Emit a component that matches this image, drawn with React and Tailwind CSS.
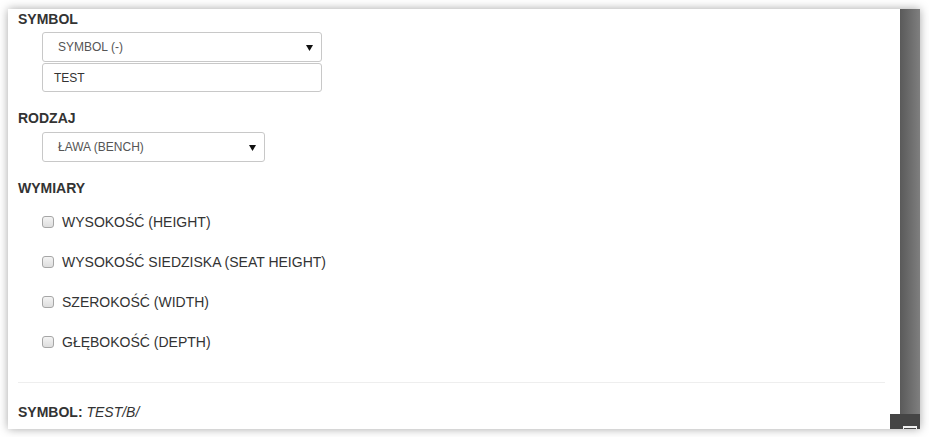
import React from "react";

function Arrow() {
  return (
    <svg width="7" height="7" viewBox="0 0 7 7" className="block">
      <path d="M0 1 L7 1 L3.5 7 Z" fill="#111" />
    </svg>
  );
}

function SelectBox({ width, text }) {
  return (
    <div
      className={`ml-[24px] h-[30px] ${width} border border-[#c8c8c8] rounded-[3px] bg-white flex items-center justify-between pl-[15px] pr-[8px]`}
    >
      <span className="text-[12px] text-[#555] leading-none">{text}</span>
      <Arrow />
    </div>
  );
}

function Check({ label }) {
  return (
    <div className="h-5 flex items-center ml-[24px]">
      <div className="w-[12px] h-[12px] rounded-[3px] border border-[#a6a6a6] bg-gradient-to-b from-[#f4f4f4] to-[#dedede]" />
      <span className="ml-[8px] text-[14px] text-[#333] leading-5">{label}</span>
    </div>
  );
}

export default function App() {
  return (
    <div
      className="w-[929px] h-[437px] bg-white relative overflow-hidden pt-[9px] pl-[8px]"
      style={{ fontFamily: '"Liberation Sans", Arial, sans-serif' }}
    >
      <div className="w-[912px] h-[420px] bg-white shadow-[0_0_9px_rgba(0,0,0,0.35)] flex relative">
        <div className="flex-1 pl-[10px] pr-[15px]">
          <div className="h-5 leading-5 text-[14px] font-bold text-[#333]">SYMBOL</div>
          <div className="mt-[3px]">
            <SelectBox width="w-[280px]" text="SYMBOL (-)" />
          </div>
          <div className="mt-[1px] ml-[24px] w-[280px] h-[29px] border border-[#c8c8c8] rounded-[3px] flex items-center pl-[11px]">
            <span className="text-[12px] text-[#333] leading-none">TEST</span>
          </div>

          <div className="mt-[16px] h-5 leading-5 text-[14px] font-bold text-[#333]">RODZAJ</div>
          <div className="mt-[4px]">
            <SelectBox width="w-[223px]" text="ŁAWA (BENCH)" />
          </div>

          <div className="mt-[16px] h-5 leading-5 text-[14px] font-bold text-[#333]">WYMIARY</div>
          <div className="mt-[14px] flex flex-col gap-5">
            <Check label="WYSOKOŚĆ (HEIGHT)" />
            <Check label="WYSOKOŚĆ SIEDZISKA (SEAT HEIGHT)" />
            <Check label="SZEROKOŚĆ (WIDTH)" />
            <Check label="GŁĘBOKOŚĆ (DEPTH)" />
          </div>

          <div className="mt-[30px] border-t border-[#eeeeee]" />

          <div className="mt-[19px] h-5 leading-5 text-[14px] text-[#333]">
            <span className="font-bold">SYMBOL: </span>
            <span className="italic">TEST/B/</span>
          </div>
        </div>
        <div className="w-[20px] h-full bg-gradient-to-r from-[#5a5a5a] to-[#7f7f7f]" />
        <div className="absolute right-0 bottom-0 w-[30px] h-[15px] bg-[#454545] flex justify-end items-end pr-[3px]">
          <div className="w-[14px] h-[3px] border-t-2 border-l border-r border-[#f0f0f0]" />
        </div>
      </div>
    </div>
  );
}
